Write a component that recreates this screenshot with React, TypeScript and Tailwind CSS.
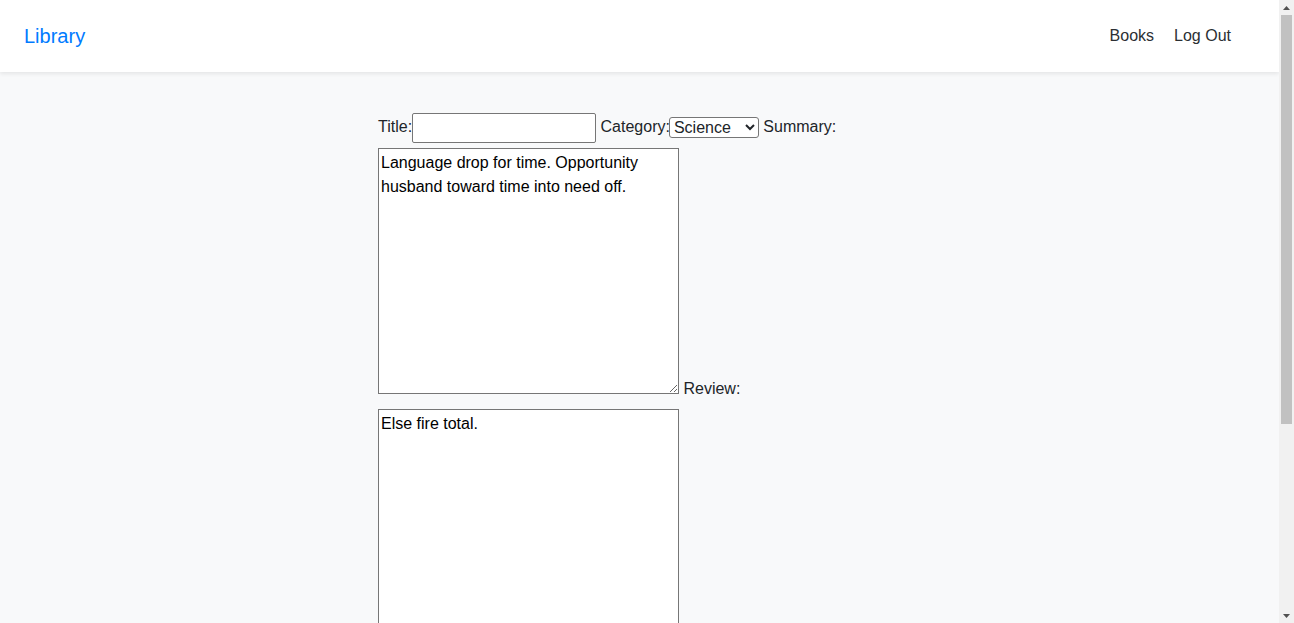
import React from "react";

export default function App() {
  return (
    <div className="flex h-screen overflow-hidden" style={{ fontFamily: '"Liberation Sans", Arial, sans-serif' }}>
      <div className="flex-1 min-w-0 overflow-hidden bg-[#f8f9fa] text-[#212529] text-[16px] leading-[1.5]">
        <nav className="h-[72px] bg-white shadow-[0_2px_4px_rgba(0,0,0,0.08)] flex items-center justify-between pl-[24px] pr-[38px]">
          <a className="text-[20px] text-[#007bff] leading-[30px]">Library</a>
          <div className="flex items-center">
            <a className="px-[10px] py-2 text-[#2b2f33]">Books</a>
            <a className="px-[10px] py-2 text-[#2b2f33]">Log Out</a>
          </div>
        </nav>
        <main className="pt-[41px] pl-[378px] pr-[400px] pb-[40px]">
          <form>
            Title:<input type="text" className="w-[184px] h-[30px] px-[3px] py-[2px] border border-[#767676] rounded-[2px] bg-white align-middle" />{" "}
            Category:<select defaultValue="Science" className="w-[90px] h-[21px] border border-[#767676] rounded-[3px] bg-white text-[16px] leading-none align-middle relative top-[-1px] -ml-px">
              <option>Science</option>
              <option>Fiction</option>
              <option>History</option>
            </select>{" "}
            Summary:{" "}
            <textarea
              defaultValue="Language drop for time. Opportunity husband toward time into need off."
              className="w-[301px] h-[246px] border border-[#767676] bg-white p-[2px] leading-[1.5] mt-[5px] text-black"
            />{" "}
            Review:{" "}
            <textarea
              defaultValue="Else fire total."
              className="w-[301px] h-[246px] border border-[#767676] bg-white p-[2px] leading-[1.5] mt-[8px] text-black"
            />
          </form>
        </main>
      </div>
      <div className="w-[15px] h-full bg-[#f1f1f1] flex flex-col items-center shrink-0">
        <div className="h-[15px] w-full flex items-center justify-center">
          <svg width="7" height="4" viewBox="0 0 7 4"><path d="M3.5 0L7 4H0z" fill="#505050" /></svg>
        </div>
        <div className="w-[11px] h-[409px] bg-[#c1c1c1]" />
        <div className="flex-1" />
        <div className="h-[15px] w-full flex items-center justify-center">
          <svg width="7" height="4" viewBox="0 0 7 4"><path d="M0 0H7L3.5 4z" fill="#505050" /></svg>
        </div>
      </div>
    </div>
  );
}
